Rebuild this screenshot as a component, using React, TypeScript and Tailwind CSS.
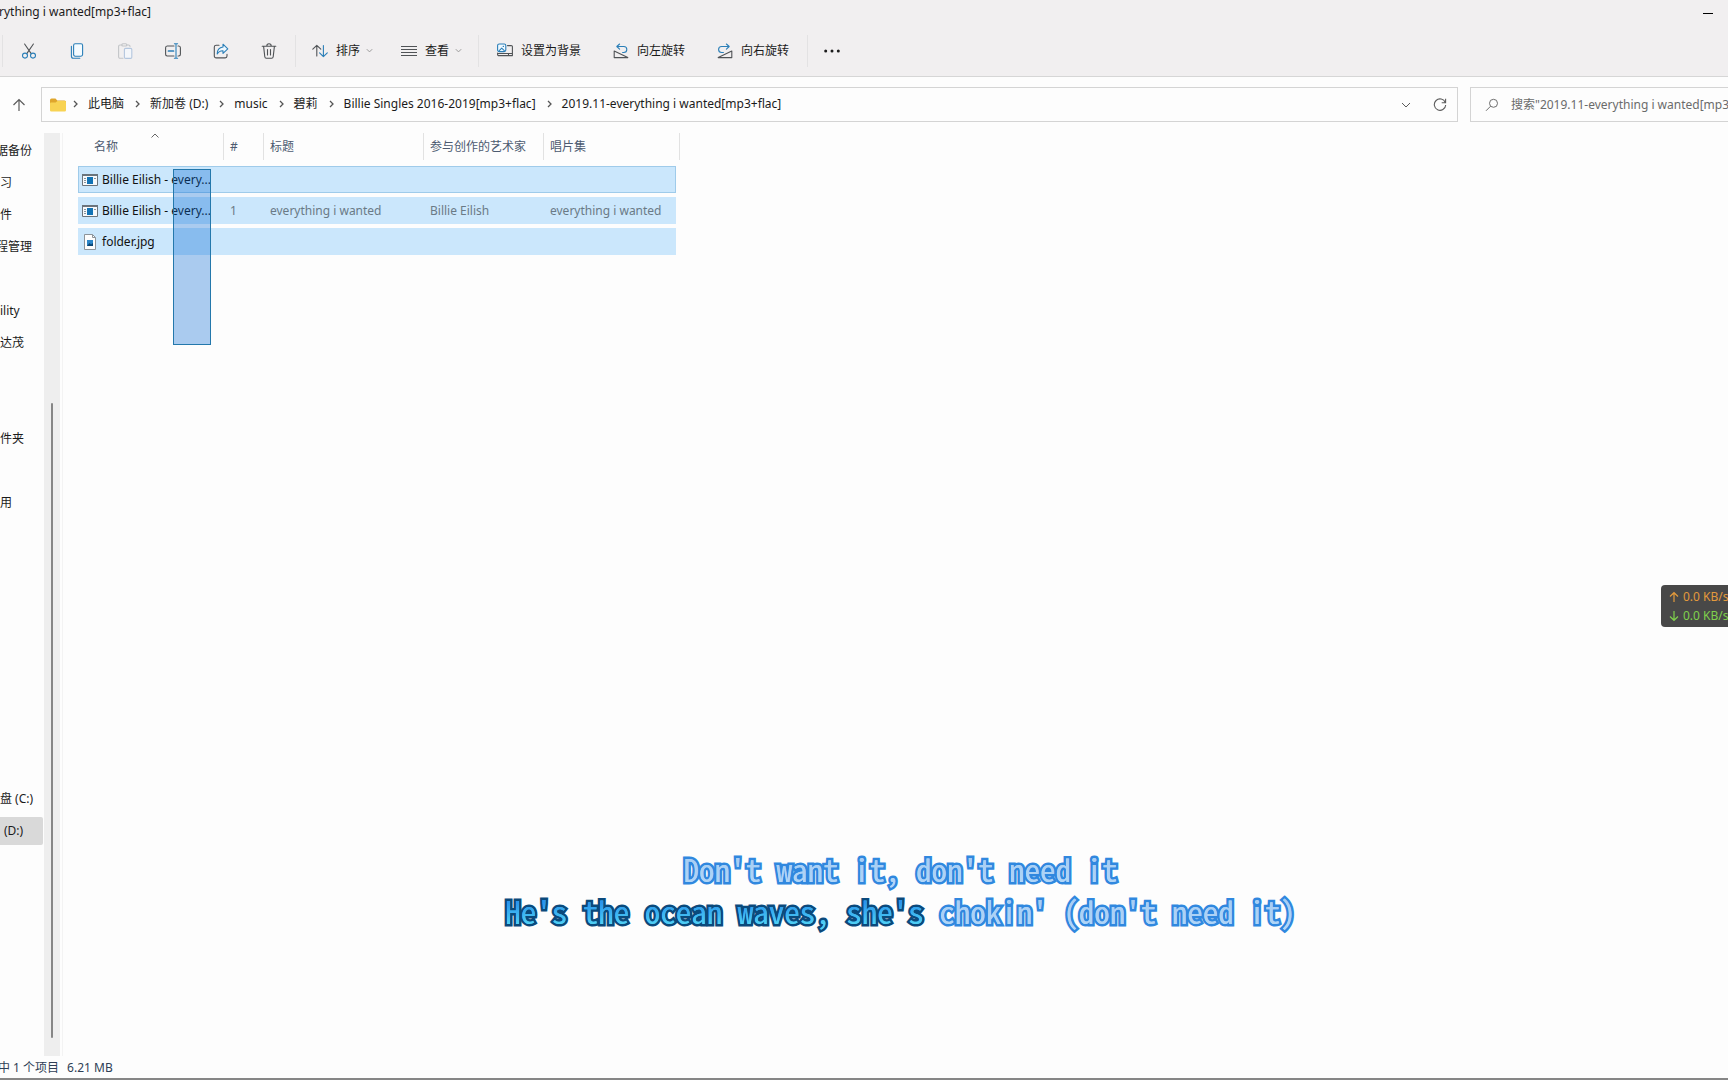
import React from 'react';

const iconClass = 'w-4 h-4 shrink-0';

function Icon({ children }: { children: React.ReactNode }) {
  return (
    <svg
      viewBox="0 0 16 16"
      className={iconClass}
      fill="none"
      stroke="#505356"
      strokeWidth="1.1"
      strokeLinecap="round"
      strokeLinejoin="round"
      aria-hidden="true"
    >
      {children}
    </svg>
  );
}

const BLUE = '#2b7fb8';

const CutIcon = () => (
  <Icon>
    <path d="M3.6 1l6.6 9.6M12.4 1L5.8 10.6" />
    <circle cx="4" cy="12.6" r="2.5" stroke={BLUE} />
    <circle cx="12" cy="12.6" r="2.5" stroke={BLUE} />
  </Icon>
);

const CopyIcon = () => (
  <Icon>
    <rect x="4.6" y=".8" width="9" height="12.4" rx="1.6" stroke={BLUE} fill="#f4fbff" />
    <path d="M2.4 3.2v10a2 2 0 0 0 2 2h6.4" stroke={BLUE} />
  </Icon>
);

const PasteIcon = () => (
  <Icon>
    <g stroke="#c3c5c8">
      <path d="M5 2H3a1.4 1.4 0 0 0-1.4 1.4v10.4A1.4 1.4 0 0 0 3 15.2h3M9.6 2h2A1.4 1.4 0 0 1 13 3.4" />
      <rect x="4.8" y=".8" width="5" height="2.2" rx="1" />
      <rect x="7.4" y="5.4" width="7.4" height="10" rx="1.2" stroke="#b4c6de" fill="#f4f6fa" />
    </g>
  </Icon>
);

const RenameIcon = () => (
  <Icon>
    <path d="M9 3H2.2A1.7 1.7 0 0 0 .6 4.7v6.6A1.7 1.7 0 0 0 2.2 13H9M13 3h.8a1.7 1.7 0 0 1 1.6 1.7v6.6A1.7 1.7 0 0 1 13.8 13H13" />
    <path d="M11 .8v14.4M9.4.7h3.2M9.4 15.3h3.2" stroke={BLUE} />
    <path d="M3.5 8h5" stroke={BLUE} strokeWidth="1.7" />
  </Icon>
);

const ShareIcon = () => (
  <Icon>
    <path d="M6 2.2H3.2A1.9 1.9 0 0 0 1.3 4v9a1.9 1.9 0 0 0 1.9 1.9h9A1.9 1.9 0 0 0 14 13v-1.6" />
    <path d="M10 1.2l4.8 4.6L10 10.4V7.7C7 7.6 5.4 8.7 4.2 11c0-4 2.2-6.6 5.8-7z" stroke={BLUE} fill="#eef8ff" />
  </Icon>
);

const DeleteIcon = () => (
  <Icon>
    <path d="M1.2 3.2h13.6M5.8 3a2.2 2.2 0 0 1 4.4 0M2.6 3.4l1.2 10.4a1.6 1.6 0 0 0 1.6 1.4h5.2a1.6 1.6 0 0 0 1.6-1.4l1.2-10.4M6.5 6.5v5.4M9.5 6.5v5.4" />
  </Icon>
);

const SortIcon = () => (
  <Icon>
    <path d="M4.8 13V2.4M.8 6.2l4-3.9 4 3.9" />
    <path d="M11.4 2.6v11M7.6 9.8l3.8 3.9 3.9-3.9" stroke={BLUE} />
  </Icon>
);

const ViewIcon = () => (
  <Icon>
    <path d="M0 3.5h16M0 6.5h16M0 9.5h16M0 12.5h16" strokeLinecap="butt" strokeWidth="1" />
  </Icon>
);

const BackgroundIcon = () => (
  <Icon>
    <path d="M10.5 2.6h3.7a1.2 1.2 0 0 1 1.2 1.2v8.8H1.8A1.2 1.2 0 0 1 .6 11.4V10M.8 10.5h14.5M11.5 12.4v-1.8" />
    <rect x=".6" y="1" width="8.2" height="7.6" rx="1.6" stroke={BLUE} fill="#eef8ff" />
    <path d="M2.2 7.6l2.5-2.4 2.6 2.4M6.2 3.4h.3" stroke={BLUE} />
  </Icon>
);

const RotateLeftIcon = () => (
  <Icon>
    <path d="M1.2 8v6.6h13.6z" />
    <path d="M6.6 1L3.8 3.5l2.8 2.6M4 3.5h6.8a3 3 0 0 1 0 6H9.6" stroke={BLUE} />
  </Icon>
);

const RotateRightIcon = () => (
  <Icon>
    <path d="M14.8 8v6.6H1.2z" />
    <path d="M9.4 1l2.8 2.5-2.8 2.6M12 3.5H4.6a3 3 0 0 0 0 6h1.8" stroke={BLUE} />
  </Icon>
);

const ChevronDown = () => (
  <svg viewBox="0 0 7 7" className="-ml-0.5 h-[7px] w-[7px]" fill="none" stroke="#9a9a9a" aria-hidden="true">
    <path d="M.8 2.2l2.7 2.7 2.7-2.7" />
  </svg>
);

const FolderIcon = () => (
  <svg viewBox="0 0 16 14" className="h-3.5 w-4 shrink-0" aria-hidden="true">
    <path d="M0 2A1.5 1.5 0 0 1 1.5.5h4L7.3 2.4H14.5A1.5 1.5 0 0 1 16 3.9V7H0z" fill="#dfa62c" />
    <path d="M0 5.4A1 1 0 0 1 1 4.4h4.6L7.4 3h7.2A1.4 1.4 0 0 1 16 4.4v7.8a1.3 1.3 0 0 1-1.3 1.3H1.3A1.3 1.3 0 0 1 0 12.2z" fill="#f8d353" />
  </svg>
);

const MediaFileIcon = () => (
  <svg viewBox="0 0 16 12" className="h-3 w-4 shrink-0" aria-hidden="true">
    <path d="M.5.5h15v11H.5z" fill="#f7f9fb" stroke="#6b747c" />
    <path d="M0 0h16v2H0z" fill="#6b747c" />
    <path d="M5 3h6v7H5z" fill="#1273b5" />
    <path d="M2 4.5h2M2 6.5h2M2 8.5h2M12 4.5h2" stroke="#8a949c" />
  </svg>
);

const ImageFileIcon = () => (
  <svg viewBox="0 0 16 16" className={iconClass} aria-hidden="true">
    <path d="M2.5.5h8l3 3v12h-11z" fill="#fdfdfd" stroke="#8c9399" />
    <path d="M10.5.5v3h3" fill="none" stroke="#8c9399" />
    <path d="M5 6h6v6H5z" fill="#2c86c8" />
    <path d="M5 12l2.5-3 1.5 1.5L11 9v3z" fill="#0c4573" />
  </svg>
);

const fileActions = [
  { label: '剪切', icon: CutIcon },
  { label: '复制', icon: CopyIcon },
  { label: '粘贴', icon: PasteIcon },
  { label: '重命名', icon: RenameIcon },
  { label: '共享', icon: ShareIcon },
  { label: '删除', icon: DeleteIcon },
];

const menus = [
  { label: '排序', icon: SortIcon },
  { label: '查看', icon: ViewIcon },
];

const imageActions = [
  { label: '设置为背景', icon: BackgroundIcon },
  { label: '向左旋转', icon: RotateLeftIcon },
  { label: '向右旋转', icon: RotateRightIcon },
];

const crumbs = [
  '此电脑',
  '新加卷 (D:)',
  'music',
  '碧莉',
  'Billie Singles 2016-2019[mp3+flac]',
  '2019.11-everything i wanted[mp3+flac]',
];

const quickAccess = ['据备份', '习', '件', '程管理', '', 'ility', '达茂', '', '', '件夹', '', '用'];

const files = [
  { name: 'Billie Eilish - every...', icon: MediaFileIcon, track: '', title: '', artist: '', album: '', focused: true },
  {
    name: 'Billie Eilish - every...',
    icon: MediaFileIcon,
    track: '1',
    title: 'everything i wanted',
    artist: 'Billie Eilish',
    album: 'everything i wanted',
    focused: false,
  },
  { name: 'folder.jpg', icon: ImageFileIcon, track: '', title: '', artist: '', album: '', focused: false },
];

const Separator = () => <div className="h-8 w-px shrink-0 bg-[#e3e2e3]" />;

function Toolbar() {
  return (
    <div className="flex h-[52px] items-center border-b border-[#d6d6d6] pl-0.5">
      <Separator />
      <div className="flex px-0.5">
        {fileActions.map((action) => (
          <button key={action.label} title={action.label} className="flex h-8 w-12 items-center justify-center">
            <action.icon />
          </button>
        ))}
      </div>
      <Separator />
      <div className="flex px-0.5">
        {menus.map((menu) => (
          <button key={menu.label} className="flex h-8 items-center gap-2 whitespace-nowrap px-3.5">
            <menu.icon />
            {menu.label}
            <ChevronDown />
          </button>
        ))}
      </div>
      <Separator />
      <div className="flex px-0.5">
        {imageActions.map((action) => (
          <button key={action.label} className="flex h-8 items-center gap-2 whitespace-nowrap px-4">
            <action.icon />
            {action.label}
          </button>
        ))}
      </div>
      <Separator />
      <button title="更多" className="flex h-8 items-center px-4">
        <svg viewBox="0 0 16 16" className={iconClass} fill="#1b1b1b" aria-hidden="true">
          <circle cx="1.7" cy="8" r="1.5" />
          <circle cx="8" cy="8" r="1.5" />
          <circle cx="14.3" cy="8" r="1.5" />
        </svg>
      </button>
    </div>
  );
}

function AddressBar() {
  return (
    <div className="flex h-[35px] shrink-0">
      <button title="上移" className="flex w-[41px] items-center justify-center pr-1">
        <svg viewBox="0 0 16 16" className="h-4 w-4" fill="none" stroke="#5c5c5c" strokeWidth="1.2" aria-hidden="true">
          <path d="M8 14V2.5M2.5 8L8 2.5 13.5 8" />
        </svg>
      </button>
      <div className="flex min-w-0 flex-1 items-center border border-[#d4d4d4] pl-2">
        <FolderIcon />
        <ol className="-ml-1 flex items-center pb-0.5 whitespace-nowrap">
          {crumbs.map((crumb) => (
            <li key={crumb} className="flex items-center">
              <svg viewBox="0 0 26 8" className="h-2 w-[26px]" fill="none" stroke="#555" strokeWidth="1.3" aria-hidden="true">
                <path d="M12 1l3 3-3 3" />
              </svg>
              <a href="#" className="text-[#1b1b1b]">{crumb}</a>
            </li>
          ))}
        </ol>
        <button title="以前的位置" className="ml-auto flex h-8 w-[34px] items-center justify-center">
          <svg viewBox="0 0 10 10" className="h-2.5 w-2.5" fill="none" stroke="#5c5c5c" aria-hidden="true">
            <path d="M1 3l4 4 4-4" />
          </svg>
        </button>
        <button title="刷新" className="flex h-8 w-[34px] items-center justify-center">
          <svg viewBox="0 0 14 14" className="h-3.5 w-3.5" fill="none" stroke="#5c5c5c" strokeWidth="1.1" aria-hidden="true">
            <path d="M12.3 4.5A5.7 5.7 0 1 0 12.7 7M12.6.8v4H8.7" />
          </svg>
        </button>
      </div>
      <div className="ml-3 flex w-[258px] shrink-0 items-center gap-3 border border-r-0 border-[#d4d4d4] pl-3.5">
        <svg viewBox="0 0 14 14" className="h-3.5 w-3.5 shrink-0" fill="none" stroke="#6e6e6e" aria-hidden="true">
          <circle cx="8.5" cy="5.3" r="4" />
          <path d="M5.6 8.2L1 12.8" />
        </svg>
        <input
          type="text"
          aria-label="搜索"
          placeholder={'搜索"2019.11-everything i wanted[mp3+flac]"'}
          className="min-w-0 flex-1 bg-transparent outline-none placeholder:text-[#6b6b6b]"
        />
      </div>
    </div>
  );
}

function Sidebar() {
  return (
    <div className="flex shrink-0 border-r border-[#f3f3f3] pr-0.5">
      <nav className="w-11 overflow-hidden whitespace-nowrap pt-0.5">
        <ul>
          {quickAccess.map((item, i) => (
            <li key={i} className={`flex h-8 items-center ${item.length === 3 ? '-ml-1' : ''}`}>
              {item && <a href="#">{item}</a>}
            </li>
          ))}
        </ul>
        <ul className="mt-[264px]">
          <li className="flex h-8 items-center">
            <a href="#">盘 (C:)</a>
          </li>
          <li className="flex h-8 items-center pr-px">
            <a href="#" className="flex h-7 w-full items-center rounded-r-xs bg-[#d9d9d9] pl-1">(D:)</a>
          </li>
        </ul>
      </nav>
      <div className="flex w-4 justify-center bg-[#eeeeee] pt-[270px] pb-[18px]">
        <div className="w-0.5 rounded-full bg-[#868686]" />
      </div>
    </div>
  );
}

function FileTable() {
  const headClass = 'h-[29px] p-0 align-top font-normal';
  const labelClass = 'flex h-[27px] items-center border-r border-[#e2e2e2] pl-1.5';

  return (
    <table className="-mt-1 ml-[15px] w-[598px] table-fixed border-separate border-spacing-x-0 border-spacing-y-1 whitespace-nowrap text-left">
      <colgroup>
        <col className="w-[146px]" />
        <col className="w-10" />
        <col className="w-40" />
        <col className="w-[120px]" />
        <col className="w-[132px]" />
      </colgroup>
      <thead className="text-[#4c5a70]">
        <tr>
          <th className={headClass}>
            <div className="relative flex h-[27px] items-center border-r border-[#e2e2e2] pl-4">
              名称
              <svg viewBox="0 0 8 5" className="absolute top-0 left-[73px] h-[5px] w-2" fill="none" stroke="#666" aria-hidden="true">
                <path d="M.5 4.5L4 1l3.5 3.5" />
              </svg>
            </div>
          </th>
          <th className={headClass}><div className={labelClass}>#</div></th>
          <th className={headClass}><div className={labelClass}>标题</div></th>
          <th className={headClass}><div className={labelClass}>参与创作的艺术家</div></th>
          <th className={headClass}><div className={`${labelClass} -mr-1`}>唱片集</div></th>
        </tr>
      </thead>
      <tbody className="text-[#6a7a86]">
        {files.map((file, i) => (
          <tr
            key={i}
            className={`h-[27px] bg-[#cbe7fc] ${file.focused ? 'outline -outline-offset-1 outline-[#9fcbea]' : ''}`}
          >
            <td className="p-0 pl-1 text-[#111]">
              <div className="flex items-center gap-1">
                <file.icon />
                {file.name}
              </div>
            </td>
            <td className="p-0 pl-1.5">{file.track}</td>
            <td className="p-0 pl-1.5">{file.title}</td>
            <td className="p-0 pl-1.5">{file.artist}</td>
            <td className="p-0 pl-1.5">{file.album}</td>
          </tr>
        ))}
      </tbody>
    </table>
  );
}

// The outline is stroked on the span, the gradient fill sits on its ::after copy
const lyricClass =
  'relative inline-block whitespace-pre [paint-order:stroke] after:absolute after:inset-0 after:bg-clip-text after:text-transparent after:content-[attr(data-text)] after:[-webkit-text-stroke:0px_transparent]';
const upcomingClass = `${lyricClass} text-[#a9cff5] [-webkit-text-stroke:5px_#3088df] after:bg-linear-to-b after:from-[#a2caf2] after:to-[#b4d8f8]`;
const sungClass = `${lyricClass} text-[#3eb4ee] [-webkit-text-stroke:5px_#0b4a7c] after:bg-linear-to-b after:from-[#2b94ec] after:from-30% after:to-[#4fd0f4] after:to-80%`;

function Lyrics() {
  const next = "Don't want it, don't need it";
  const sung = "He's the ocean waves, she's";
  const rest = " chokin' (don't need it)";

  return (
    <div className="pointer-events-none absolute inset-x-0 bottom-[124px] pl-2.5 text-center font-['Noto_Sans_CJK_SC',monospace] text-[31px] leading-[42px] font-normal [font-feature-settings:'hwid']">
      <p>
        <span className={upcomingClass} data-text={next}>{next}</span>
      </p>
      <p className="whitespace-nowrap">
        <span className={sungClass} data-text={sung}>{sung}</span>
        <span className={upcomingClass} data-text={rest}>{rest}</span>
      </p>
    </div>
  );
}

function NetworkMeter() {
  return (
    <div className="absolute top-[452px] right-0 w-[67px] overflow-hidden rounded-l-sm bg-[#484848] py-0.5 pl-2 leading-[19px] whitespace-nowrap">
      <p className="flex items-center gap-1 text-[#e39a3c]">
        <svg viewBox="0 0 10 12" className="h-3 w-2.5 shrink-0" fill="none" stroke="currentColor" strokeWidth="1.2" aria-hidden="true">
          <path d="M5 11V2M1 5.5L5 1.7l4 3.8" />
        </svg>
        0.0 KB/s
      </p>
      <p className="flex items-center gap-1 text-[#7fd04c]">
        <svg viewBox="0 0 10 12" className="h-3 w-2.5 shrink-0" fill="none" stroke="currentColor" strokeWidth="1.2" aria-hidden="true">
          <path d="M5 1v9M1 6.5l4 3.8 4-3.8" />
        </svg>
        0.0 KB/s
      </p>
    </div>
  );
}

export default function App() {
  return (
    <div className="flex min-h-screen flex-col overflow-hidden border-b-2 border-[#868686] bg-[#fdfdfd] font-['Noto_Sans','Noto_Sans_CJK_SC',sans-serif] text-xs text-[#1b1b1b]">
      <header className="bg-[#f1eff0]">
        <div className="flex h-[25px] items-center justify-between pr-3.5 pb-0.5">
          <h1 className="-ml-px whitespace-nowrap">rything i wanted[mp3+flac]</h1>
          <button title="最小化" className="flex h-6 w-3 items-center justify-center">
            <span className="mt-1 h-px w-2.5 bg-black" />
          </button>
        </div>
        <Toolbar />
      </header>

      <div className="flex flex-1 flex-col pt-2.5">
        <AddressBar />
        <div className="mt-[11px] flex flex-1">
          <Sidebar />
          <main className="relative min-w-0 flex-1">
            <FileTable />
            <div className="absolute top-9 left-[110px] h-[176px] w-[38px] border border-[#2478ac] bg-[#0064d2]/33" />
            <Lyrics />
            <NetworkMeter />
          </main>
        </div>
      </div>

      <footer className="flex h-[22px] items-center gap-2 whitespace-nowrap pt-0.5 text-[#2f3f56]">
        <span className="-ml-0.5">中 1 个项目</span>
        <span>6.21 MB</span>
      </footer>
    </div>
  );
}
